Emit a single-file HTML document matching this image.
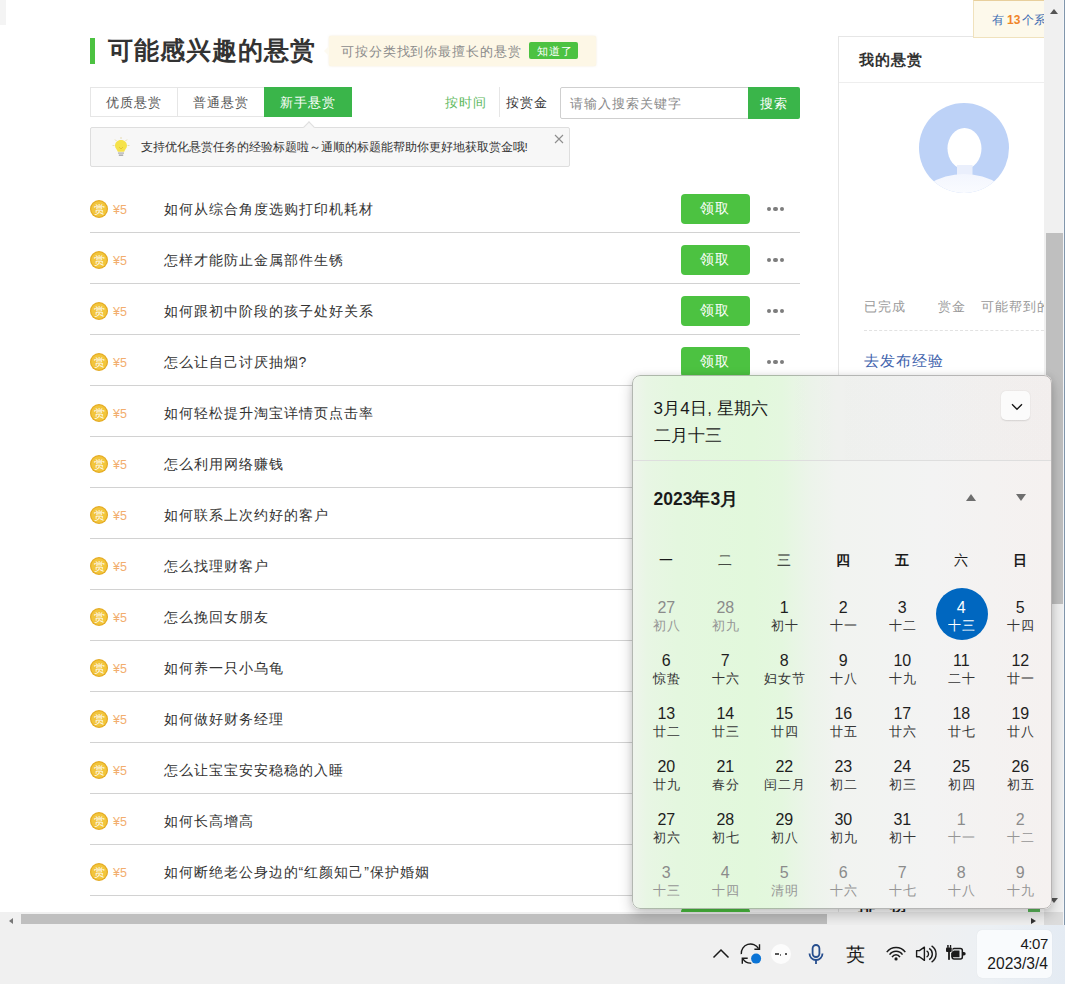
<!DOCTYPE html>
<html><head><meta charset="utf-8"><style>
*{margin:0;padding:0;box-sizing:border-box}
html,body{width:1065px;height:984px;overflow:hidden;background:#fff;font-family:"Liberation Sans",sans-serif;color:#333}
.a{position:absolute}
.t{white-space:nowrap;line-height:1}
#page{position:absolute;left:0;top:0;width:1065px;height:925px;background:#fff;overflow:hidden}
.row{position:absolute;left:90px;width:710px;height:51px;border-bottom:1px solid #d2d2d2}
.coin{position:absolute;left:0;top:18px;width:18px;height:18px}
.coin svg{position:absolute;left:0;top:0}
.coin span{position:absolute;left:3.5px;top:3.5px;font-size:11px;line-height:11px;color:#fff}
.amt{position:absolute;left:23px;top:22px;font-size:12.5px;color:#f2ad6e;line-height:12px}
.q{position:absolute;left:73.5px;top:20px;font-size:14px;letter-spacing:1px;line-height:14px;color:#333;white-space:nowrap}
.btn{position:absolute;left:591px;top:12px;width:69px;height:30px;border-radius:4px;background:#4cc241}
.btn span{position:absolute;left:19px;top:7px;font-size:14px;letter-spacing:1px;line-height:14px;color:#fff;white-space:nowrap}
.dots{position:absolute;left:676.5px;top:24.5px;width:18px;height:5px}
.dots i{position:absolute;top:0;width:4.6px;height:4.6px;border-radius:50%;background:#7d7d7d}
#cal{position:absolute;left:632px;top:375px;width:420px;height:534px;border-radius:8px;overflow:hidden;
 background:linear-gradient(90deg,#eff4ed 0px,#e8f6e4 15px,#e4f7df 45px,#e2f8dc 120px,#e4f7df 150px,#ecf4ea 178px,#f1f3f0 205px,#f3f3f3 300px,#f4f2f1 355px,#f5f1f0 420px);box-shadow:0 6px 14px rgba(0,0,0,.22),0 0 6px rgba(0,0,0,.08)}
.wd{position:absolute;top:177.5px;width:60px;text-align:center;font-size:13.5px;line-height:1;color:#1a1a1a}
.n{position:absolute;width:60px;text-align:center;font-size:16px;line-height:16px}
.l{position:absolute;width:60px;text-align:center;font-size:12.5px;letter-spacing:1px;padding-left:1px;line-height:12.5px;white-space:nowrap}
#tb{position:absolute;left:0;top:925px;width:1065px;height:59px;background:linear-gradient(90deg,#f0f0f0 0%,#f0f0f0 85%,#ecf0f4 93%,#e4ebf3 100%)}
</style></head><body>
<div id="page">
<div class="a" style="left:0;top:0;width:6px;height:25px;background:#f4f4f4"></div>
<div class="a" style="left:90px;top:38px;width:5px;height:26px;background:#4cc241"></div>
<div class="a t" style="left:108px;top:38px;font-size:25px;letter-spacing:1px;color:#333;font-weight:bold;">可能感兴趣的悬赏</div>
<div class="a" style="left:329px;top:36px;width:267px;height:30px;background:#fdf7e6;border-radius:2px;box-shadow:0 0 2px rgba(230,210,160,.5)"></div>
<div class="a" style="left:324px;top:46px;width:0;height:0;border-top:5px solid transparent;border-bottom:5px solid transparent;border-right:5px solid #fdfaf0"></div>
<div class="a t" style="left:341px;top:44.5px;font-size:13px;letter-spacing:0.9px;color:#8b8b8b;">可按分类找到你最擅长的悬赏</div>
<div class="a" style="left:529px;top:42px;width:49px;height:17px;background:#4cc241;border-radius:2px"></div>
<div class="a t" style="left:537px;top:46px;font-size:11px;letter-spacing:1.2px;color:#fff;">知道了</div>
<div class="a" style="left:90px;top:87px;width:262px;height:30px;border:1px solid #e6e6e6"></div>
<div class="a" style="left:177px;top:88px;width:1px;height:28px;background:#e6e6e6"></div>
<div class="a t" style="left:106px;top:96px;font-size:13px;letter-spacing:1px;color:#555;">优质悬赏</div>
<div class="a t" style="left:193px;top:96px;font-size:13px;letter-spacing:1px;color:#555;">普通悬赏</div>
<div class="a" style="left:264px;top:87px;width:88px;height:30px;background:#3ab54a"></div>
<div class="a t" style="left:280px;top:96px;font-size:13px;letter-spacing:1px;color:#fff;">新手悬赏</div>
<div class="a t" style="left:445px;top:96px;font-size:13px;letter-spacing:1px;color:#5eb95e;">按时间</div>
<div class="a" style="left:499px;top:87px;width:1px;height:30px;background:#e6e6e6"></div>
<div class="a t" style="left:506px;top:96px;font-size:13px;letter-spacing:1px;color:#333;">按赏金</div>
<div class="a" style="left:560px;top:87px;width:190px;height:32px;border:1px solid #cfcfcf;border-radius:2px 0 0 2px"></div>
<div class="a t" style="left:570px;top:97px;font-size:13px;letter-spacing:1px;color:#8a8a8a;">请输入搜索关键字</div>
<div class="a" style="left:748px;top:87px;width:52px;height:32px;background:#3ab54a;border-radius:0 2px 2px 0"></div>
<div class="a t" style="left:760px;top:97px;font-size:13px;letter-spacing:1px;color:#fff;">搜索</div>
<div class="a" style="left:90px;top:127px;width:480px;height:40px;background:#f7f7f7;border:1px solid #dedede;border-radius:2px"></div>
<div class="a" style="left:305px;top:123px;width:8px;height:8px;background:#f7f7f7;border-left:1px solid #dedede;border-top:1px solid #dedede;transform:rotate(45deg)"></div>
<svg class="a" style="left:110px;top:136px" width="22" height="22" viewBox="0 0 22 22">
<g stroke="#e6dcb0" stroke-width="1"><line x1="11" y1="1" x2="11" y2="3"/><line x1="2.5" y1="9.5" x2="4.5" y2="9.5"/><line x1="17.5" y1="9.5" x2="19.5" y2="9.5"/><line x1="5" y1="3.5" x2="6.5" y2="5"/><line x1="17" y1="3.5" x2="15.5" y2="5"/></g>
<path d="M11 4 C7.4 4 5 6.6 5 9.8 C5 12.3 7.2 13.6 7.8 15.8 L14.2 15.8 C14.8 13.6 17 12.3 17 9.8 C17 6.6 14.6 4 11 4Z" fill="#f5e24a"/>
<path d="M9 11 L11 13 L13 11" fill="none" stroke="#e0c030" stroke-width=".8"/>
<rect x="8" y="16.2" width="6" height="1.8" fill="#c4c4c4"/><rect x="8.8" y="18.4" width="4.4" height="1.6" fill="#b0b0b0"/>
</svg>
<div class="a t" style="left:140.5px;top:142px;font-size:11.8px;color:#333;">支持优化悬赏任务的经验标题啦～通顺的标题能帮助你更好地获取赏金哦!</div>
<svg class="a" style="left:554px;top:134px" width="10" height="10" viewBox="0 0 10 10"><path d="M1 1L9 9M9 1L1 9" stroke="#8e8e8e" stroke-width="1.1"/></svg>
<div class="row" style="top:182px"><div class="coin"><svg width="18" height="18" viewBox="0 0 18 18"><circle cx="9" cy="9" r="9" fill="#e4aa22"/><circle cx="9" cy="9" r="7.8" fill="#f2c53c"/></svg><span>赏</span></div><div class="amt">¥5</div><div class="q">如何从综合角度选购打印机耗材</div><div class="btn"><span>领取</span></div><div class="dots"><i style="left:0"></i><i style="left:6.5px"></i><i style="left:13px"></i></div></div>
<div class="row" style="top:233px"><div class="coin"><svg width="18" height="18" viewBox="0 0 18 18"><circle cx="9" cy="9" r="9" fill="#e4aa22"/><circle cx="9" cy="9" r="7.8" fill="#f2c53c"/></svg><span>赏</span></div><div class="amt">¥5</div><div class="q">怎样才能防止金属部件生锈</div><div class="btn"><span>领取</span></div><div class="dots"><i style="left:0"></i><i style="left:6.5px"></i><i style="left:13px"></i></div></div>
<div class="row" style="top:284px"><div class="coin"><svg width="18" height="18" viewBox="0 0 18 18"><circle cx="9" cy="9" r="9" fill="#e4aa22"/><circle cx="9" cy="9" r="7.8" fill="#f2c53c"/></svg><span>赏</span></div><div class="amt">¥5</div><div class="q">如何跟初中阶段的孩子处好关系</div><div class="btn"><span>领取</span></div><div class="dots"><i style="left:0"></i><i style="left:6.5px"></i><i style="left:13px"></i></div></div>
<div class="row" style="top:335px"><div class="coin"><svg width="18" height="18" viewBox="0 0 18 18"><circle cx="9" cy="9" r="9" fill="#e4aa22"/><circle cx="9" cy="9" r="7.8" fill="#f2c53c"/></svg><span>赏</span></div><div class="amt">¥5</div><div class="q">怎么让自己讨厌抽烟?</div><div class="btn"><span>领取</span></div><div class="dots"><i style="left:0"></i><i style="left:6.5px"></i><i style="left:13px"></i></div></div>
<div class="row" style="top:386px"><div class="coin"><svg width="18" height="18" viewBox="0 0 18 18"><circle cx="9" cy="9" r="9" fill="#e4aa22"/><circle cx="9" cy="9" r="7.8" fill="#f2c53c"/></svg><span>赏</span></div><div class="amt">¥5</div><div class="q">如何轻松提升淘宝详情页点击率</div><div class="btn"><span>领取</span></div><div class="dots"><i style="left:0"></i><i style="left:6.5px"></i><i style="left:13px"></i></div></div>
<div class="row" style="top:437px"><div class="coin"><svg width="18" height="18" viewBox="0 0 18 18"><circle cx="9" cy="9" r="9" fill="#e4aa22"/><circle cx="9" cy="9" r="7.8" fill="#f2c53c"/></svg><span>赏</span></div><div class="amt">¥5</div><div class="q">怎么利用网络赚钱</div><div class="btn"><span>领取</span></div><div class="dots"><i style="left:0"></i><i style="left:6.5px"></i><i style="left:13px"></i></div></div>
<div class="row" style="top:488px"><div class="coin"><svg width="18" height="18" viewBox="0 0 18 18"><circle cx="9" cy="9" r="9" fill="#e4aa22"/><circle cx="9" cy="9" r="7.8" fill="#f2c53c"/></svg><span>赏</span></div><div class="amt">¥5</div><div class="q">如何联系上次约好的客户</div><div class="btn"><span>领取</span></div><div class="dots"><i style="left:0"></i><i style="left:6.5px"></i><i style="left:13px"></i></div></div>
<div class="row" style="top:539px"><div class="coin"><svg width="18" height="18" viewBox="0 0 18 18"><circle cx="9" cy="9" r="9" fill="#e4aa22"/><circle cx="9" cy="9" r="7.8" fill="#f2c53c"/></svg><span>赏</span></div><div class="amt">¥5</div><div class="q">怎么找理财客户</div><div class="btn"><span>领取</span></div><div class="dots"><i style="left:0"></i><i style="left:6.5px"></i><i style="left:13px"></i></div></div>
<div class="row" style="top:590px"><div class="coin"><svg width="18" height="18" viewBox="0 0 18 18"><circle cx="9" cy="9" r="9" fill="#e4aa22"/><circle cx="9" cy="9" r="7.8" fill="#f2c53c"/></svg><span>赏</span></div><div class="amt">¥5</div><div class="q">怎么挽回女朋友</div><div class="btn"><span>领取</span></div><div class="dots"><i style="left:0"></i><i style="left:6.5px"></i><i style="left:13px"></i></div></div>
<div class="row" style="top:641px"><div class="coin"><svg width="18" height="18" viewBox="0 0 18 18"><circle cx="9" cy="9" r="9" fill="#e4aa22"/><circle cx="9" cy="9" r="7.8" fill="#f2c53c"/></svg><span>赏</span></div><div class="amt">¥5</div><div class="q">如何养一只小乌龟</div><div class="btn"><span>领取</span></div><div class="dots"><i style="left:0"></i><i style="left:6.5px"></i><i style="left:13px"></i></div></div>
<div class="row" style="top:692px"><div class="coin"><svg width="18" height="18" viewBox="0 0 18 18"><circle cx="9" cy="9" r="9" fill="#e4aa22"/><circle cx="9" cy="9" r="7.8" fill="#f2c53c"/></svg><span>赏</span></div><div class="amt">¥5</div><div class="q">如何做好财务经理</div><div class="btn"><span>领取</span></div><div class="dots"><i style="left:0"></i><i style="left:6.5px"></i><i style="left:13px"></i></div></div>
<div class="row" style="top:743px"><div class="coin"><svg width="18" height="18" viewBox="0 0 18 18"><circle cx="9" cy="9" r="9" fill="#e4aa22"/><circle cx="9" cy="9" r="7.8" fill="#f2c53c"/></svg><span>赏</span></div><div class="amt">¥5</div><div class="q">怎么让宝宝安安稳稳的入睡</div><div class="btn"><span>领取</span></div><div class="dots"><i style="left:0"></i><i style="left:6.5px"></i><i style="left:13px"></i></div></div>
<div class="row" style="top:794px"><div class="coin"><svg width="18" height="18" viewBox="0 0 18 18"><circle cx="9" cy="9" r="9" fill="#e4aa22"/><circle cx="9" cy="9" r="7.8" fill="#f2c53c"/></svg><span>赏</span></div><div class="amt">¥5</div><div class="q">如何长高增高</div><div class="btn"><span>领取</span></div><div class="dots"><i style="left:0"></i><i style="left:6.5px"></i><i style="left:13px"></i></div></div>
<div class="row" style="top:845px"><div class="coin"><svg width="18" height="18" viewBox="0 0 18 18"><circle cx="9" cy="9" r="9" fill="#e4aa22"/><circle cx="9" cy="9" r="7.8" fill="#f2c53c"/></svg><span>赏</span></div><div class="amt">¥5</div><div class="q">如何断绝老公身边的“红颜知己”保护婚姻</div><div class="btn"><span>领取</span></div><div class="dots"><i style="left:0"></i><i style="left:6.5px"></i><i style="left:13px"></i></div></div>
<div class="row" style="top:896px"><div class="coin"><svg width="18" height="18" viewBox="0 0 18 18"><circle cx="9" cy="9" r="9" fill="#e4aa22"/><circle cx="9" cy="9" r="7.8" fill="#f2c53c"/></svg><span>赏</span></div><div class="amt">¥5</div><div class="q">如何</div><div class="btn"><span>领取</span></div><div class="dots"><i style="left:0"></i><i style="left:6.5px"></i><i style="left:13px"></i></div></div>
<div class="a" style="left:838px;top:36px;width:240px;height:900px;border:1px solid #e6e6e6;background:#fff"></div>
<div class="a" style="left:839px;top:82px;width:220px;height:1px;background:#eeeeee"></div>
<div class="a t" style="left:858.5px;top:52px;font-size:15px;letter-spacing:1px;color:#333;font-weight:bold;">我的悬赏</div>
<svg class="a" style="left:919px;top:103px" width="90" height="90" viewBox="0 0 90 90">
<defs><clipPath id="cc"><circle cx="45" cy="45" r="45"/></clipPath><linearGradient id="bd" x1="0" y1="0" x2="0" y2="1"><stop offset="0" stop-color="#f3f6fe"/><stop offset="0.35" stop-color="#fbfcff"/><stop offset="1" stop-color="#ffffff"/></linearGradient></defs>
<circle cx="45" cy="45" r="45" fill="#bdd2f7"/>
<g clip-path="url(#cc)">
<ellipse cx="45.5" cy="45.5" rx="17" ry="20.5" fill="#ffffff"/>
<rect x="38" y="62" width="15.5" height="12" fill="#eaeffc"/>
<ellipse cx="45" cy="104" rx="48" ry="33" fill="url(#bd)"/>
</g>
</svg>
<div class="a t" style="left:863.5px;top:299.5px;font-size:13px;letter-spacing:1px;color:#999;">已完成</div>
<div class="a t" style="left:938px;top:299.5px;font-size:13px;letter-spacing:1px;color:#999;">赏金</div>
<div class="a t" style="left:980.5px;top:299.5px;font-size:13px;letter-spacing:1px;color:#999;">可能帮到的人</div>
<div class="a" style="left:864px;top:330px;width:190px;height:0;border-top:1px dashed #e2e2e2"></div>
<div class="a t" style="left:863.5px;top:353px;font-size:15px;letter-spacing:1px;color:#3f63ad;">去发布经验</div>
<div class="a t" style="left:858px;top:897px;font-size:17px;color:#222;font-weight:bold;">排</div>
<div class="a t" style="left:890px;top:897px;font-size:17px;color:#222;font-weight:bold;">榜</div>
<div class="a" style="left:1028px;top:907px;width:12px;height:6px;background:#5cb85c"></div>
<div class="a" style="left:973px;top:0;width:100px;height:38px;background:#fdf9eb;border:1px solid #f0e2bd;border-top:1px solid #e8cf9c"></div>
<div class="a t" style="left:992px;top:13.5px;font-size:11.5px;color:#3d6db3">有<b style="color:#f0852a;font-size:12px;margin:0 2px 0 3px">13</b>个系统</div>
<div class="a" style="left:1044px;top:0;width:20px;height:912px;background:#f0f0f0"></div>
<div class="a" style="left:1063px;top:0;width:1px;height:925px;background:#f3f5f8"></div>
<div class="a" style="left:1064px;top:0;width:1px;height:925px;background:#8196ab"></div>
<div class="a" style="left:1050px;top:9px;width:0;height:0;border-left:4.5px solid transparent;border-right:4.5px solid transparent;border-bottom:5px solid #555"></div>
<div class="a" style="left:1046px;top:233px;width:17px;height:371px;background:#bfbfbf"></div>
<div class="a" style="left:1050px;top:898px;width:0;height:0;border-left:4.5px solid transparent;border-right:4.5px solid transparent;border-top:5px solid #555"></div>
<div class="a" style="left:0;top:912px;width:1063px;height:13px;background:#f0f0f0"></div>
<div class="a" style="left:1044px;top:912px;width:19px;height:13px;background:#dcdcdc"></div>
<div class="a" style="left:21px;top:914px;width:806px;height:10px;background:#bfbfbf"></div>
<div class="a" style="left:9px;top:918px;width:0;height:0;border-top:3px solid transparent;border-bottom:3px solid transparent;border-right:4px solid #777"></div>
<div class="a" style="left:1031px;top:918px;width:0;height:0;border-top:3px solid transparent;border-bottom:3px solid transparent;border-left:5px solid #333"></div>
</div>
<div id="cal"><div class="a" style="left:1px;top:1px;width:418px;height:532px">
<div class="a" style="left:0;top:0;width:418px;height:85px;background:linear-gradient(90deg,rgba(0,0,0,0) 150px,rgba(0,0,0,.012) 220px)"></div>
<div class="a t" style="left:20.5px;top:23.5px;font-size:17px;letter-spacing:0.2px;color:#1a1a1a;">3月4日, 星期六</div>
<div class="a t" style="left:20.5px;top:50.5px;font-size:17px;letter-spacing:0.3px;color:#1a1a1a;">二月十三</div>
<div class="a" style="left:368px;top:15px;width:29px;height:29px;background:#fbfbfb;border-radius:5px;box-shadow:0 0.5px 1.5px rgba(0,0,0,.12)"></div>
<svg class="a" style="left:378px;top:27px" width="12" height="8" viewBox="0 0 12 8"><path d="M1 1.3L6 6.3L11 1.3" fill="none" stroke="#1a1a1a" stroke-width="1.4"/></svg>
<div class="a" style="left:0;top:84px;width:418px;height:1px;background:#dedede"></div>
<div class="a t" style="left:20.5px;top:114.5px;font-size:17.5px;color:#1a1a1a;font-weight:bold;">2023年3月</div>
<div class="a" style="left:333px;top:118px;width:0;height:0;border-left:5px solid transparent;border-right:5px solid transparent;border-bottom:7px solid #6e6e6e"></div>
<div class="a" style="left:383px;top:118px;width:0;height:0;border-left:5px solid transparent;border-right:5px solid transparent;border-top:7px solid #6e6e6e"></div>
<div class="wd" style="left:3.3px;">一</div>
<div class="wd" style="left:62.3px;">二</div>
<div class="wd" style="left:121.3px;">三</div>
<div class="wd" style="left:180.3px;font-weight:bold;">四</div>
<div class="wd" style="left:239.3px;font-weight:bold;">五</div>
<div class="wd" style="left:298.3px;">六</div>
<div class="wd" style="left:357.3px;font-weight:bold;">日</div>
<div class="n" style="left:3.3px;top:224px;color:#8b8b8b">27</div>
<div class="l" style="left:3.3px;top:243.5px;color:#959595">初八</div>
<div class="n" style="left:62.3px;top:224px;color:#8b8b8b">28</div>
<div class="l" style="left:62.3px;top:243.5px;color:#959595">初九</div>
<div class="n" style="left:121.3px;top:224px;color:#1e1e1e">1</div>
<div class="l" style="left:121.3px;top:243.5px;color:#353535">初十</div>
<div class="n" style="left:180.3px;top:224px;color:#1e1e1e">2</div>
<div class="l" style="left:180.3px;top:243.5px;color:#353535">十一</div>
<div class="n" style="left:239.3px;top:224px;color:#1e1e1e">3</div>
<div class="l" style="left:239.3px;top:243.5px;color:#353535">十二</div>
<div class="a" style="left:303.1px;top:212px;width:52px;height:52px;border-radius:50%;background:#0067c0"></div>
<div class="n" style="left:298.3px;top:224px;color:#fff">4</div>
<div class="l" style="left:298.3px;top:243.5px;color:#fff">十三</div>
<div class="n" style="left:357.3px;top:224px;color:#1e1e1e">5</div>
<div class="l" style="left:357.3px;top:243.5px;color:#353535">十四</div>
<div class="n" style="left:3.3px;top:277px;color:#1e1e1e">6</div>
<div class="l" style="left:3.3px;top:296.5px;color:#353535">惊蛰</div>
<div class="n" style="left:62.3px;top:277px;color:#1e1e1e">7</div>
<div class="l" style="left:62.3px;top:296.5px;color:#353535">十六</div>
<div class="n" style="left:121.3px;top:277px;color:#1e1e1e">8</div>
<div class="l" style="left:121.3px;top:296.5px;color:#353535">妇女节</div>
<div class="n" style="left:180.3px;top:277px;color:#1e1e1e">9</div>
<div class="l" style="left:180.3px;top:296.5px;color:#353535">十八</div>
<div class="n" style="left:239.3px;top:277px;color:#1e1e1e">10</div>
<div class="l" style="left:239.3px;top:296.5px;color:#353535">十九</div>
<div class="n" style="left:298.3px;top:277px;color:#1e1e1e">11</div>
<div class="l" style="left:298.3px;top:296.5px;color:#353535">二十</div>
<div class="n" style="left:357.3px;top:277px;color:#1e1e1e">12</div>
<div class="l" style="left:357.3px;top:296.5px;color:#353535">廿一</div>
<div class="n" style="left:3.3px;top:330px;color:#1e1e1e">13</div>
<div class="l" style="left:3.3px;top:349.5px;color:#353535">廿二</div>
<div class="n" style="left:62.3px;top:330px;color:#1e1e1e">14</div>
<div class="l" style="left:62.3px;top:349.5px;color:#353535">廿三</div>
<div class="n" style="left:121.3px;top:330px;color:#1e1e1e">15</div>
<div class="l" style="left:121.3px;top:349.5px;color:#353535">廿四</div>
<div class="n" style="left:180.3px;top:330px;color:#1e1e1e">16</div>
<div class="l" style="left:180.3px;top:349.5px;color:#353535">廿五</div>
<div class="n" style="left:239.3px;top:330px;color:#1e1e1e">17</div>
<div class="l" style="left:239.3px;top:349.5px;color:#353535">廿六</div>
<div class="n" style="left:298.3px;top:330px;color:#1e1e1e">18</div>
<div class="l" style="left:298.3px;top:349.5px;color:#353535">廿七</div>
<div class="n" style="left:357.3px;top:330px;color:#1e1e1e">19</div>
<div class="l" style="left:357.3px;top:349.5px;color:#353535">廿八</div>
<div class="n" style="left:3.3px;top:383px;color:#1e1e1e">20</div>
<div class="l" style="left:3.3px;top:402.5px;color:#353535">廿九</div>
<div class="n" style="left:62.3px;top:383px;color:#1e1e1e">21</div>
<div class="l" style="left:62.3px;top:402.5px;color:#353535">春分</div>
<div class="n" style="left:121.3px;top:383px;color:#1e1e1e">22</div>
<div class="l" style="left:121.3px;top:402.5px;color:#353535">闰二月</div>
<div class="n" style="left:180.3px;top:383px;color:#1e1e1e">23</div>
<div class="l" style="left:180.3px;top:402.5px;color:#353535">初二</div>
<div class="n" style="left:239.3px;top:383px;color:#1e1e1e">24</div>
<div class="l" style="left:239.3px;top:402.5px;color:#353535">初三</div>
<div class="n" style="left:298.3px;top:383px;color:#1e1e1e">25</div>
<div class="l" style="left:298.3px;top:402.5px;color:#353535">初四</div>
<div class="n" style="left:357.3px;top:383px;color:#1e1e1e">26</div>
<div class="l" style="left:357.3px;top:402.5px;color:#353535">初五</div>
<div class="n" style="left:3.3px;top:436px;color:#1e1e1e">27</div>
<div class="l" style="left:3.3px;top:455.5px;color:#353535">初六</div>
<div class="n" style="left:62.3px;top:436px;color:#1e1e1e">28</div>
<div class="l" style="left:62.3px;top:455.5px;color:#353535">初七</div>
<div class="n" style="left:121.3px;top:436px;color:#1e1e1e">29</div>
<div class="l" style="left:121.3px;top:455.5px;color:#353535">初八</div>
<div class="n" style="left:180.3px;top:436px;color:#1e1e1e">30</div>
<div class="l" style="left:180.3px;top:455.5px;color:#353535">初九</div>
<div class="n" style="left:239.3px;top:436px;color:#1e1e1e">31</div>
<div class="l" style="left:239.3px;top:455.5px;color:#353535">初十</div>
<div class="n" style="left:298.3px;top:436px;color:#8b8b8b">1</div>
<div class="l" style="left:298.3px;top:455.5px;color:#959595">十一</div>
<div class="n" style="left:357.3px;top:436px;color:#8b8b8b">2</div>
<div class="l" style="left:357.3px;top:455.5px;color:#959595">十二</div>
<div class="n" style="left:3.3px;top:489px;color:#8b8b8b">3</div>
<div class="l" style="left:3.3px;top:508.5px;color:#959595">十三</div>
<div class="n" style="left:62.3px;top:489px;color:#8b8b8b">4</div>
<div class="l" style="left:62.3px;top:508.5px;color:#959595">十四</div>
<div class="n" style="left:121.3px;top:489px;color:#8b8b8b">5</div>
<div class="l" style="left:121.3px;top:508.5px;color:#959595">清明</div>
<div class="n" style="left:180.3px;top:489px;color:#8b8b8b">6</div>
<div class="l" style="left:180.3px;top:508.5px;color:#959595">十六</div>
<div class="n" style="left:239.3px;top:489px;color:#8b8b8b">7</div>
<div class="l" style="left:239.3px;top:508.5px;color:#959595">十七</div>
<div class="n" style="left:298.3px;top:489px;color:#8b8b8b">8</div>
<div class="l" style="left:298.3px;top:508.5px;color:#959595">十八</div>
<div class="n" style="left:357.3px;top:489px;color:#8b8b8b">9</div>
<div class="l" style="left:357.3px;top:508.5px;color:#959595">十九</div>
</div><div class="a" style="left:0;top:0;width:420px;height:534px;border:1px solid rgba(0,0,0,.25);border-radius:8px"></div>
</div>
<div id="tb">
<svg class="a" style="left:712px;top:22px" width="18" height="12" viewBox="0 0 18 12"><path d="M1.5 10.5L9 3L16.5 10.5" fill="none" stroke="#1a1a1a" stroke-width="1.5"/></svg>
<svg class="a" style="left:739px;top:17px" width="26" height="24" viewBox="0 0 26 24">
<path d="M2.3 12.1 A9.3 9.3 0 0 1 19.6 6.6" fill="none" stroke="#1a1a1a" stroke-width="1.4"/>
<path d="M20.5 2.2 V7.3 H15.4" fill="none" stroke="#1a1a1a" stroke-width="1.4"/>
<path d="M12.3 21.1 A9.2 9.2 0 0 1 3.9 16.9" fill="none" stroke="#1a1a1a" stroke-width="1.4"/>
<path d="M3.3 21.7 V16.3 H8.7" fill="none" stroke="#1a1a1a" stroke-width="1.4"/>
<circle cx="17.1" cy="16.6" r="5.8" fill="#f0f0f0"/>
<circle cx="17.1" cy="16.6" r="5" fill="#0b74d6"/>
</svg>
<div class="a" style="left:771px;top:19px;width:20px;height:20px;border-radius:50%;background:#fcfcfc"></div>
<div class="a" style="left:775px;top:28px;width:4px;height:2px;background:#555"></div><div class="a" style="left:780px;top:29px;width:1px;height:2px;background:#777"></div><div class="a" style="left:785px;top:28px;width:2px;height:2px;background:#555"></div>
<svg class="a" style="left:808px;top:19px" width="16" height="21" viewBox="0 0 16 21">
<rect x="4.6" y="1" width="6.8" height="12" rx="3.4" fill="none" stroke="#274e8e" stroke-width="1.8"/>
<path d="M1.5 9.5 A6.5 6.5 0 0 0 14.5 9.5" fill="none" stroke="#274e8e" stroke-width="1.8"/>
<line x1="8" y1="16" x2="8" y2="20" stroke="#274e8e" stroke-width="1.8"/>
</svg>
<div class="a t" style="left:846px;top:20px;font-size:19px;color:#1a1a1a;">英</div>
<svg class="a" style="left:885px;top:20px" width="22" height="18" viewBox="0 0 22 18">
<path d="M1.8 7.1 A11.5 11.5 0 0 1 20.3 7.1" fill="none" stroke="#1a1a1a" stroke-width="1.5"/>
<path d="M4.6 9.6 A7.8 7.8 0 0 1 17.5 9.6" fill="none" stroke="#1a1a1a" stroke-width="1.5"/>
<path d="M7.1 12.2 A4.4 4.4 0 0 1 14.9 12.2" fill="none" stroke="#1a1a1a" stroke-width="1.5"/>
<circle cx="11.05" cy="13.9" r="1.6" fill="#1a1a1a"/>
</svg>
<svg class="a" style="left:915px;top:20px" width="22" height="18" viewBox="0 0 22 18">
<path d="M1.6 5.6 L4.4 5.6 L9.4 2.2 L9.4 15.4 L4.4 11.8 L1.6 11.8 Z" fill="none" stroke="#1a1a1a" stroke-width="1.4" stroke-linejoin="round"/>
<path d="M11.6 5.8 A3.6 3.6 0 0 1 11.6 12.2" fill="none" stroke="#1a1a1a" stroke-width="1.4"/>
<path d="M14.2 3.4 A6.6 6.6 0 0 1 14.2 14.6" fill="none" stroke="#1a1a1a" stroke-width="1.4"/>
<path d="M16.6 0.9 A9.6 9.6 0 0 1 16.6 17.1" fill="none" stroke="#1a1a1a" stroke-width="1.4"/>
</svg>
<svg class="a" style="left:945px;top:20px" width="22" height="16" viewBox="0 0 22 16">
<rect x="7.15" y="3.55" width="10.2" height="10.5" rx="2" fill="none" stroke="#1a1a1a" stroke-width="1.5"/>
<path d="M8.8 5.4 H14.5 V12.2 H6.3 V8 Z" fill="#1a1a1a"/>
<path d="M17.8 7 H18.9 A1.8 1.8 0 0 1 18.9 10.6 H17.8 Z" fill="#1a1a1a"/>
<g stroke="#f0f0f0" stroke-width="1.6" fill="#f0f0f0"><rect x="1" y="2.5" width="5.7" height="4.5" rx="1"/><rect x="3.1" y="7" width="1.8" height="7.8"/></g>
<rect x="2.2" y="-0.2" width="1.5" height="3" fill="#1a1a1a"/><rect x="4.9" y="-0.2" width="1.3" height="3" fill="#1a1a1a"/>
<rect x="1" y="2.5" width="5.7" height="4.5" rx="1" fill="#1a1a1a"/>
<rect x="3.1" y="7" width="1.8" height="7.8" fill="#1a1a1a"/>
</svg>
<div class="a" style="left:977px;top:5px;width:75px;height:48px;background:#f9fbfd;border-radius:5px;box-shadow:0 0 1px rgba(0,0,0,.1)"></div>
<div class="a t" style="left:990px;top:10.5px;width:58px;text-align:right;font-size:15px;letter-spacing:-0.4px;color:#1a1a1a">4:07</div>
<div class="a t" style="left:970px;top:30.5px;width:78px;text-align:right;font-size:15.6px;color:#1a1a1a">2023/3/4</div>
</div>
</body></html>
